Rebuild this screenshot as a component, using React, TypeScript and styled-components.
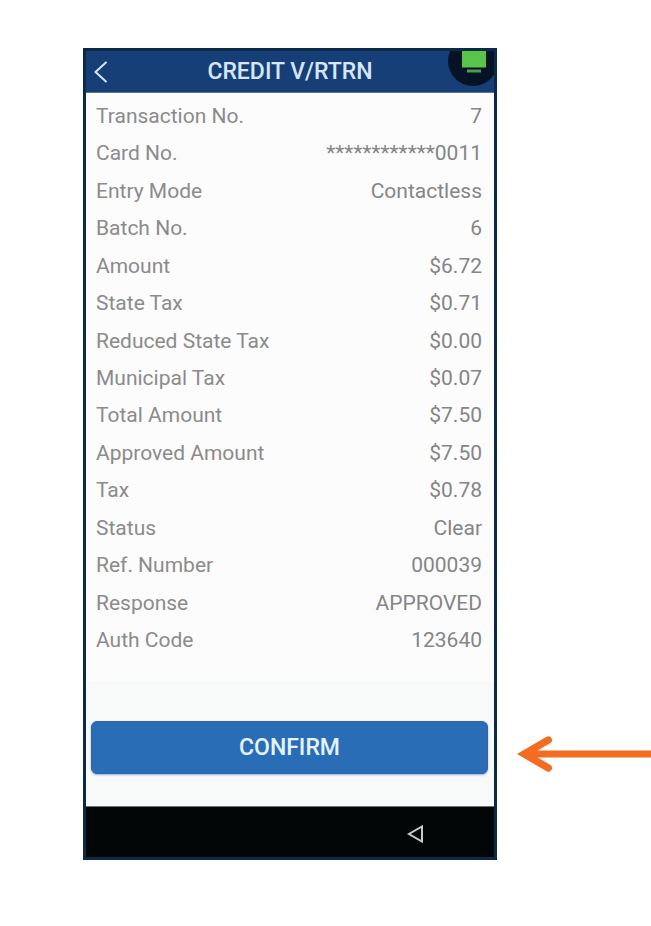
import React from "react";
import styled, { createGlobalStyle } from "styled-components";

const GlobalStyle = createGlobalStyle`
  *, *::before, *::after { box-sizing: border-box; }
  body { margin: 0; background: #ffffff; font-family: Roboto, "Liberation Sans", sans-serif; }
`;

const Page = styled.main`
  display: grid;
  grid-template-columns: minmax(0, 1fr) 134px;
  column-gap: 20px;
  padding: 48px 0 66px 83px;
`;

const Device = styled.section`
  display: flex;
  flex-direction: column;
  border: 3px solid #0b2a48;
  background: #f8f9f9;
`;

const TitleBar = styled.header`
  display: grid;
  grid-template-columns: 48px 1fr 48px;
  align-items: center;
  height: 42px;
  overflow: hidden;
  color: #d8e6f8;
  background: #163f77;
  border-bottom: 1px solid #5c7391;
`;

const Title = styled.h1`
  margin: 0;
  font-size: 23px;
  line-height: 24px;
  font-weight: 500;
  text-align: center;
  white-space: nowrap;
`;

const IconButton = styled.button`
  display: flex;
  align-items: center;
  padding: 0;
  border: 0;
  background: none;
  color: inherit;
  cursor: pointer;
`;

const BackButton = styled(IconButton)`
  align-self: stretch;
  padding-left: 8px;
`;

const StatusBadge = styled.svg`
  display: block;
  align-self: start;
`;

const Details = styled.dl`
  display: grid;
  grid-auto-rows: 1fr;
  min-height: 588px;
  margin: 0;
  padding: 4px 12px 22px 10px;
  background: #fcfcfc;
`;

const DetailRow = styled.div`
  display: flex;
  align-items: center;
  justify-content: space-between;
  font-size: 21px;
  line-height: 24px;
  color: #8b8b8b;
`;

const Label = styled.dt`
  margin: 0;
`;

const Value = styled.dd`
  margin: 0;
  text-align: right;
  color: #858585;
`;

const Actions = styled.div`
  display: flex;
  padding: 40px 6px 32px 5px;
`;

const ConfirmButton = styled.button`
  flex: 1;
  height: 53px;
  border: 1px solid #3562a8;
  border-radius: 6px;
  background: #296db6;
  color: #e6f3fd;
  font-family: inherit;
  font-size: 23px;
  line-height: 24px;
  font-weight: 500;
  box-shadow: 0 1px 2px #8fb3d4;
  cursor: pointer;
`;

const NavigationBar = styled.nav`
  display: flex;
  align-items: center;
  justify-content: flex-end;
  height: 51px;
  padding: 4px 70px 0 0;
  background: #030606;
  border-top: 1px solid #707373;
`;

const Pointer = styled.svg`
  display: block;
  align-self: end;
  margin-bottom: 88px;
`;

const details = [
  ["Transaction No.", "7"],
  ["Card No.", "************0011"],
  ["Entry Mode", "Contactless"],
  ["Batch No.", "6"],
  ["Amount", "$6.72"],
  ["State Tax", "$0.71"],
  ["Reduced State Tax", "$0.00"],
  ["Municipal Tax", "$0.07"],
  ["Total Amount", "$7.50"],
  ["Approved Amount", "$7.50"],
  ["Tax", "$0.78"],
  ["Status", "Clear"],
  ["Ref. Number", "000039"],
  ["Response", "APPROVED"],
  ["Auth Code", "123640"],
];

export default function App() {
  return (
    <>
      <GlobalStyle />
      <Page>
        <Device>
          <TitleBar>
            <BackButton type="button" aria-label="Back">
              <svg width="14" height="22" viewBox="0 0 14 22" fill="none" stroke="currentColor" strokeWidth="2">
                <path d="M12.5 1 1.500 11l11 10" />
              </svg>
            </BackButton>
            <Title>CREDIT V/RTRN</Title>
            <StatusBadge width="48" height="41" viewBox="0 0 48 41" aria-hidden="true">
              <circle cx="27" cy="10" r="25" fill="#061326" />
              <path d="M16 0h24v16.500H16z" fill="#59c44b" />
              <path d="M21 18.500h14v3H21z" fill="#4a9e50" />
            </StatusBadge>
          </TitleBar>
          <Details>
            {details.map(([label, value]) => (
              <DetailRow key={label}>
                <Label>{label}</Label>
                <Value>{value}</Value>
              </DetailRow>
            ))}
          </Details>
          <Actions>
            <ConfirmButton type="button">CONFIRM</ConfirmButton>
          </Actions>
          <NavigationBar aria-label="System">
            <IconButton type="button" aria-label="System back">
              <svg width="17" height="18" viewBox="0 0 17 18" fill="none" stroke="#c9c9c9" strokeWidth="2">
                <path d="M15 1.5v15L2 9z" />
              </svg>
            </IconButton>
          </NavigationBar>
        </Device>
        <Pointer width="134" height="36" viewBox="0 0 134 36" aria-hidden="true">
          <path
            d="M0 18 29.500 .8A3.700 3.700 0 0 1 33.500 7L20.500 14.500H134v7H20.500L33.500 29A3.700 3.700 0 0 1 29.500 35.200z"
            fill="#f36c21"
          />
        </Pointer>
      </Page>
    </>
  );
}
